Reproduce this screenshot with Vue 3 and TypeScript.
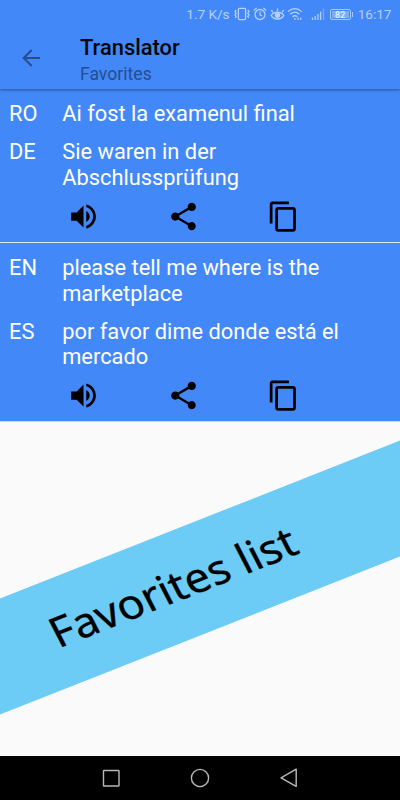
<script setup lang="ts">
interface Line {
  code: string
  text: string
}
interface Favorite {
  id: number
  lines: Line[]
}

const favorites: Favorite[] = [
  {
    id: 1,
    lines: [
      { code: 'RO', text: 'Ai fost la examenul final' },
      { code: 'DE', text: 'Sie waren in der Abschlussprüfung' },
    ],
  },
  {
    id: 2,
    lines: [
      { code: 'EN', text: 'please tell me where is the marketplace' },
      { code: 'ES', text: 'por favor dime donde está el mercado' },
    ],
  },
]

const actions = [
  {
    name: 'Listen',
    path: 'M3 9v6h4l5 5V4L7 9H3zm13.5 3c0-1.77-1.02-3.29-2.5-4.03v8.05c1.48-.73 2.5-2.25 2.5-4.02zM14 3.23v2.06c2.89.86 5 3.54 5 6.71s-2.11 5.85-5 6.71v2.06c4.01-.91 7-4.49 7-8.77s-2.99-7.86-7-8.77z',
  },
  {
    name: 'Share',
    path: 'M18 16.08c-.76 0-1.44.3-1.96.77L8.91 12.7c.05-.23.09-.46.09-.7s-.04-.47-.09-.7l7.05-4.11c.54.5 1.25.81 2.04.81 1.66 0 3-1.34 3-3s-1.34-3-3-3-3 1.34-3 3c0 .24.04.47.09.7L8.04 9.81C7.5 9.31 6.79 9 6 9c-1.66 0-3 1.34-3 3s1.34 3 3 3c.79 0 1.5-.31 2.04-.81l7.12 4.16c-.05.21-.08.43-.08.65 0 1.61 1.31 2.92 2.92 2.92 1.61 0 2.92-1.31 2.92-2.92s-1.31-2.92-2.92-2.92z',
  },
  {
    name: 'Copy',
    path: 'M16 1H4c-1.1 0-2 .9-2 2v14h2V3h12V1zm3 4H8c-1.1 0-2 .9-2 2v14c0 1.1.9 2 2 2h11c1.1 0 2-.9 2-2V7c0-1.1-.9-2-2-2zm0 16H8V7h11v14z',
  },
]
</script>

<template>
  <div class="screen">
    <div class="status">
      <span class="speed">1.7 K/s</span>
      <svg class="vibrate" width="16" height="14" viewBox="0 0 16 14">
        <rect x="4.4" y="1.4" width="7.2" height="11.2" rx="1" />
        <path d="M2.2 3l-1.2 1.6 1.2 1.6-1.2 1.6 1.2 1.6-1 1.5M13.8 3l1.2 1.6-1.2 1.6 1.2 1.6-1.2 1.6 1 1.5" />
      </svg>
      <svg class="alarm" width="14" height="14" viewBox="0 0 14 14">
        <circle cx="7" cy="7.5" r="5" />
        <path d="M7 4.6v3.2l2 1.2M.8 3.6l2.8-2.5M13.2 3.6l-2.8-2.5" />
      </svg>
      <svg class="eye" width="15" height="14" viewBox="0 0 15 14">
        <path d="M1.2 8.4c2.6-4.2 10-4.2 12.6 0-2.6 4.8-10 4.8-12.6 0zM2.8 5L1.3 3M7.5 4V1.4M12.2 5l1.5-2" />
        <circle class="fill" cx="7.5" cy="8.2" r="2.7" />
      </svg>
      <svg class="wifi" width="16" height="14" viewBox="0 0 16 14">
        <path d="M1 4.6c4-4 9.6-4 13.6 0M3.2 7.3c2.8-2.7 6.4-2.7 9.2 0M5.4 9.8c1.6-1.4 3.3-1.4 4.9 0" />
        <path d="M7 12h1.6M11 10.5v2.5M13.8 10.5v2.5" />
      </svg>
      <svg class="signal" width="14" height="14" viewBox="0 0 14 14">
        <path d="M1.5 10.5v2.5M4.2 9v4M6.9 7v6M9.6 4.5v8.5" />
        <path class="dim" d="M12.5 1.5v11.5" />
      </svg>
      <div class="battery"><span class="level">82</span></div>
      <span class="clock">16:17</span>
    </div>

    <header class="toolbar">
      <svg class="back" width="24" height="24" viewBox="0 0 24 24">
        <path d="M21 12H4.5M12.7 4L4.7 12l8 8" />
      </svg>
      <div class="titles">
        <h1>Translator</h1>
        <p>Favorites</p>
      </div>
    </header>

    <main class="list">
      <section v-for="item in favorites" :key="item.id" class="item">
        <div v-for="line in item.lines" :key="line.code" class="line">
          <span class="code">{{ line.code }}</span>
          <span class="text">{{ line.text }}</span>
        </div>
        <div class="actions">
          <button v-for="action in actions" :key="action.name" :aria-label="action.name">
            <svg width="33" height="33" viewBox="0 0 24 24"><path :d="action.path" /></svg>
          </button>
        </div>
      </section>
    </main>

    <svg class="banner" width="400" height="334" viewBox="0 0 400 334">
      <polygon points="0,176.5 400,18.5 400,134.5 0,292.5" />
      <text transform="matrix(0.93 -0.367 0.46 0.898 58.5 226.5)" textLength="261" lengthAdjust="spacingAndGlyphs">Favorites list</text>
    </svg>

    <nav class="navbar">
      <svg width="20" height="20" viewBox="0 0 20 20"><rect x="2.5" y="2.5" width="15.5" height="15.5" rx="0.5" /></svg>
      <svg width="20" height="20" viewBox="0 0 20 20"><circle cx="10" cy="10" r="8.6" /></svg>
      <svg width="20" height="20" viewBox="0 0 20 20"><path d="M17.2 1.2v17.2L2 9.8z" /></svg>
    </nav>
  </div>
</template>

<style>
body {
  margin: 0;
}
</style>

<style scoped>
.screen {
  width: 400px;
  height: 800px;
  display: flex;
  flex-direction: column;
  overflow: hidden;
  background: #fafafa;
  font-family: Roboto, 'Liberation Sans', sans-serif;
}
.status {
  position: relative;
  z-index: 1;
  height: 28px;
  flex: none;
  box-sizing: border-box;
  padding-right: 8.5px;
  display: flex;
  align-items: center;
  justify-content: flex-end;
  background: #4388f8;
  color: #b4d0fc;
  font-size: 13.6px;
  line-height: 27px;
}
.status svg {
  fill: none;
  stroke: #b4d0fc;
  stroke-width: 1.3;
}
.status .fill {
  fill: #b4d0fc;
  stroke: none;
}
.status .dim {
  opacity: 0.5;
}
.vibrate {
  margin-left: 4px;
}
.alarm {
  margin-left: 3px;
}
.eye {
  margin-left: 3px;
}
.wifi {
  margin-left: 2px;
}
.signal {
  margin-left: 8px;
}
.battery {
  position: relative;
  width: 21px;
  height: 11px;
  margin: 0 7px 0 5px;
  box-sizing: border-box;
  padding: 1px;
  border: 1px solid #a9c9fb;
  border-radius: 2px;
  display: flex;
}
.battery::after {
  content: '';
  position: absolute;
  right: -3px;
  top: 2px;
  width: 1px;
  height: 5px;
  background: #a9c9fb;
}
.level {
  flex: 1;
  background: #7eaefa;
  color: #e8f1ff;
  font-size: 9px;
  font-weight: 500;
  line-height: 8px;
  text-align: center;
}
.toolbar {
  position: relative;
  height: 61px;
  flex: none;
  box-sizing: border-box;
  padding: 0 0 2px 19px;
  display: flex;
  align-items: center;
  background: #4388f8;
  box-shadow: 0 1px 3px rgba(0, 0, 0, 0.4);
}
.back {
  fill: none;
  stroke: #264d8d;
  stroke-width: 2;
}
.titles {
  margin-left: 37px;
  padding-top: 6px;
}
h1 {
  margin: 0;
  font-size: 21.9px;
  line-height: 28px;
  font-weight: 500;
  color: #03060c;
}
p {
  margin: 0;
  font-size: 17.6px;
  line-height: 25px;
  color: #264d8d;
}
.list {
  flex: none;
  background: #4388f8;
}
.item {
  box-sizing: border-box;
  height: 153px;
  padding: 12px 0 0 9px;
  display: flex;
  flex-direction: column;
  gap: 12.7px;
}
.item + .item {
  height: 180px;
  border-top: 1px solid #dfeaf8;
  border-bottom: 1px solid #cfd9ea;
}
.line {
  display: flex;
  color: #fff;
  font-size: 21.85px;
  line-height: 25.6px;
}
.code {
  width: 53.2px;
  flex: none;
}
.text {
  width: 300px;
}
.actions {
  display: flex;
  margin: -3.4px 0 0 24.5px;
}
button {
  width: 100px;
  height: 33px;
  padding: 0;
  border: 0;
  background: none;
  display: flex;
  justify-content: center;
}
.banner {
  flex: none;
}
.banner polygon {
  fill: #6dccf5;
}
.banner text {
  font-family: 'Noto Sans', 'Open Sans', sans-serif;
  font-size: 42px;
  fill: #000;
  stroke: #000;
  stroke-width: 0.3;
}
.navbar {
  flex: 1;
  display: flex;
  align-items: center;
  justify-content: center;
  gap: 69px;
  background: #000;
}
.navbar svg {
  fill: none;
  stroke: #b8b8b8;
  stroke-width: 1.4;
  stroke-linejoin: round;
}
</style>
